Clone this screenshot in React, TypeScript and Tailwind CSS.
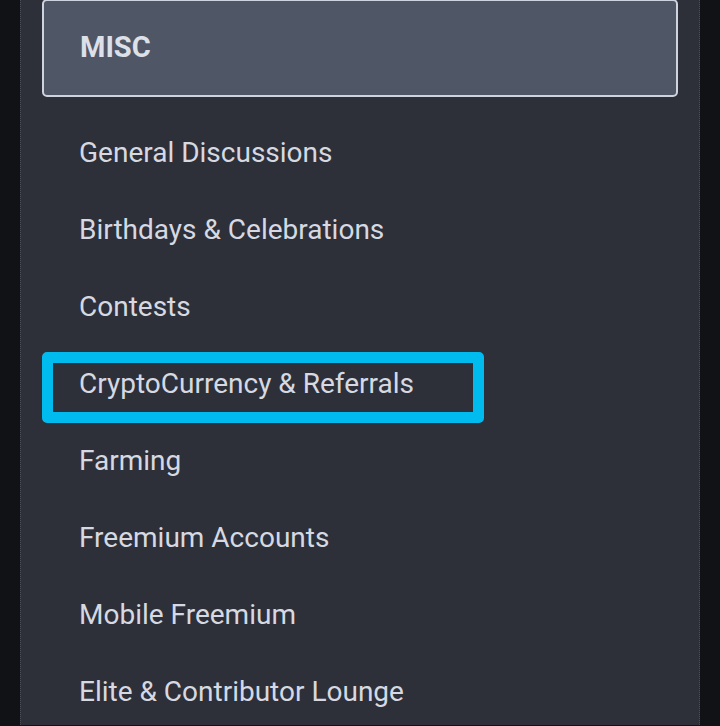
import React from "react";

const items = [
  "General Discussions",
  "Birthdays & Celebrations",
  "Contests",
  "CryptoCurrency & Referrals",
  "Farming",
  "Freemium Accounts",
  "Mobile Freemium",
  "Elite & Contributor Lounge",
];

export default function App() {
  return (
    <div className="w-[720px] h-[726px] overflow-hidden bg-[#111215] px-[20px]" style={{ fontFamily: "Roboto, 'Noto Sans', sans-serif" }}>
      <div className="h-full bg-[#2d3038] border-x border-dotted border-[#4a4d55] px-[21px]">
        <div className="h-[98px] rounded-[5px] border-2 border-[#cfd3df] bg-[#4f5665] flex items-center pl-[36px] -mt-[1px]">
          <span className="text-[29px] font-bold text-[#dde0e8]">MISC</span>
        </div>
        <ul className="mt-[17px]">
          {items.map((t, i) => (
            <li key={t} className="relative h-[77px] flex items-center pl-[37px] text-[28px] text-[#d6d9e2]">
              {i === 3 && (
                <div className="absolute left-0 top-[7px] w-[442px] h-[71px] rounded-[5px] border-[11px] border-[#00bbee]" />
              )}
              <span className="relative">{t}</span>
            </li>
          ))}
        </ul>
      </div>
    </div>
  );
}
